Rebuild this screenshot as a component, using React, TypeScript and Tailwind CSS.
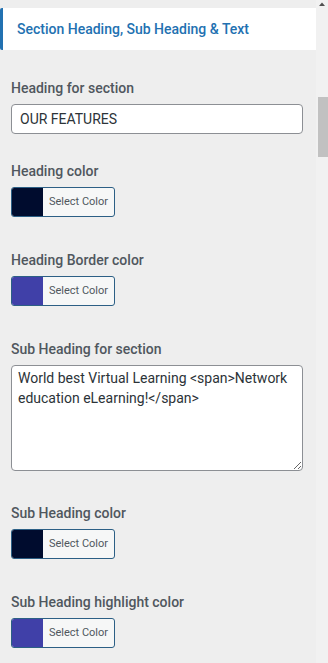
import type { ReactNode } from 'react';

// Customizer-style panel: section header, text fields and color pickers.

function Field({ label, top, children }: { label: string; top: string; children: ReactNode }) {
  return (
    <div className={top}>
      <div className="h-[20px] text-[14px] leading-[20px] font-medium text-[#50575e]">{label}</div>
      <div className="mt-[6px]">{children}</div>
    </div>
  );
}

function ColorButton({ swatch }: { swatch: string }) {
  return (
    <button
      type="button"
      className="flex h-[30px] w-[104px] items-stretch overflow-hidden rounded-[3px] border border-[#2c5f85] bg-[#f6f7f7] p-0"
    >
      <span className="w-[31px] shrink-0" style={{ backgroundColor: swatch }} />
      <span className="flex flex-1 items-center justify-center text-[11px] text-[#50575e]">Select Color</span>
    </button>
  );
}

export default function App() {
  return (
    <div
      className="flex h-[663px] w-[328px] overflow-hidden bg-[#eeeeee]"
      style={{ fontFamily: 'Roboto, "Liberation Sans", sans-serif' }}
    >
      <main className="w-[316px] shrink-0 pt-2">
        <div className="flex h-[42px] items-center rounded-l-[2px] border-l-[3px] border-[#2271b1] bg-white pl-[14px] text-[14px] font-medium text-[#2271b1]">
          Section Heading, Sub Heading &amp; Text
        </div>

        <div className="pr-[13px] pl-[11px]">
          <Field label="Heading for section" top="mt-[28px]">
            <input
              defaultValue="OUR FEATURES"
              className="block h-[30px] w-full rounded-[4px] border border-[#8c8f94] bg-white px-[8px] text-[14px] text-[#2c3338] outline-none"
            />
          </Field>

          <Field label="Heading color" top="mt-[27px]">
            <ColorButton swatch="#000c2e" />
          </Field>

          <Field label="Heading Border color" top="mt-[33px]">
            <ColorButton swatch="#4040a8" />
          </Field>

          <Field label="Sub Heading for section" top="mt-[33px]">
            <textarea
              defaultValue="World best Virtual Learning <span>Network education eLearning!</span>"
              className="block h-[106px] w-full rounded-[4px] border border-[#8c8f94] bg-white px-[6px] py-[2px] text-[14px] leading-[20px] text-[#2c3338] outline-none"
            />
          </Field>

          <Field label="Sub Heading color" top="mt-[32px]">
            <ColorButton swatch="#000c2e" />
          </Field>

          <Field label="Sub Heading highlight color" top="mt-[33px]">
            <ColorButton swatch="#4040a8" />
          </Field>
        </div>
      </main>

      {/* fake scrollbar */}
      <div className="flex w-[12px] flex-col bg-[#f1f1f1]">
        <svg width="12" height="6" viewBox="0 0 12 6" className="mt-px">
          <path d="M3 5 L6 1.5 L9 5 Z" fill="#505050" />
        </svg>
        <div className="mt-[90px] ml-[2px] h-[60px] w-[10px] bg-[#c1c1c1]" />
      </div>
    </div>
  );
}
